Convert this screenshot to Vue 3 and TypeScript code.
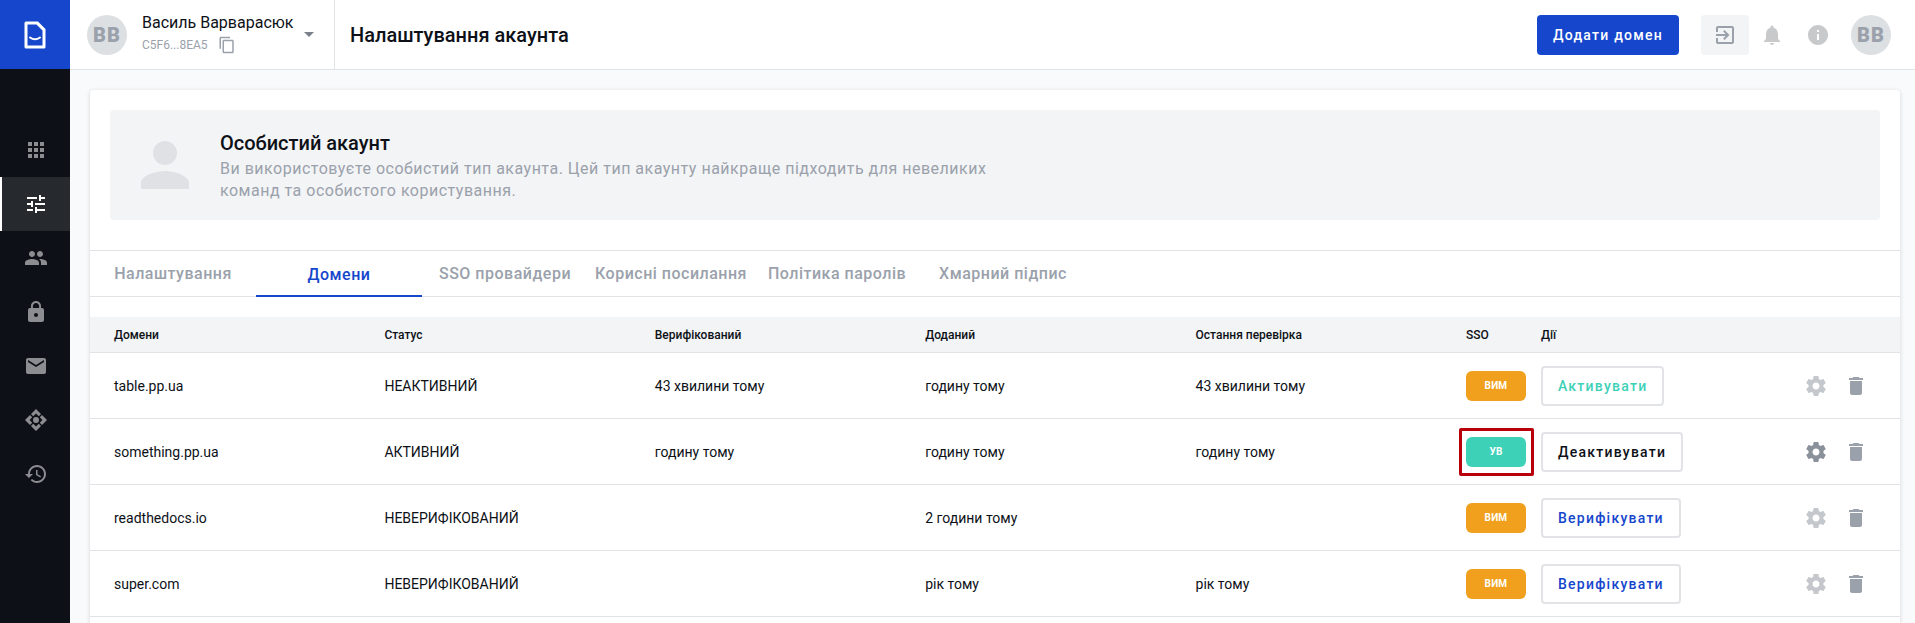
<script setup lang="ts">
interface Row { domain: string; status: string; verified: string; added: string; checked: string; sso: 'ВИМ' | 'УВ'; action: string; tone: string; active?: boolean }
const rows: Row[] = [
  { domain: 'table.pp.ua', status: 'НЕАКТИВНИЙ', verified: '43 хвилини тому', added: 'годину тому', checked: '43 хвилини тому', sso: 'ВИМ', action: 'Активувати', tone: 'teal' },
  { domain: 'something.pp.ua', status: 'АКТИВНИЙ', verified: 'годину тому', added: 'годину тому', checked: 'годину тому', sso: 'УВ', action: 'Деактивувати', tone: 'dark', active: true },
  { domain: 'readthedocs.io', status: 'НЕВЕРИФІКОВАНИЙ', verified: '', added: '2 години тому', checked: '', sso: 'ВИМ', action: 'Верифікувати', tone: 'blue' },
  { domain: 'super.com', status: 'НЕВЕРИФІКОВАНИЙ', verified: '', added: 'рік тому', checked: 'рік тому', sso: 'ВИМ', action: 'Верифікувати', tone: 'blue' },
]
const tabs = ['Налаштування', 'Домени', 'SSO провайдери', 'Корисні посилання', 'Політика паролів', 'Хмарний підпис']
const columns = ['Домени', 'Статус', 'Верифікований', 'Доданий', 'Остання перевірка', 'SSO', 'Дії']
const nav = [
  'M4 8h4V4H4v4zm6 12h4v-4h-4v4zm-6 0h4v-4H4v4zm0-6h4v-4H4v4zm6 0h4v-4h-4v4zm6-10v4h4V4h-4zm-6 4h4V4h-4v4zm6 6h4v-4h-4v4zm0 6h4v-4h-4v4z',
  'M3 17v2h6v-2H3zM3 5v2h10V5H3zm10 16v-2h8v-2h-8v-2h-2v6h2zM7 9v2H3v2h4v2h2V9H7zm14 4v-2H11v2h10zm-6-4h2V7h4V5h-4V3h-2v6z',
  'M16 11c1.66 0 2.99-1.34 2.99-3S17.66 5 16 5c-1.66 0-3 1.34-3 3s1.34 3 3 3zm-8 0c1.66 0 2.99-1.34 2.99-3S9.66 5 8 5C6.34 5 5 6.34 5 8s1.34 3 3 3zm0 2c-2.33 0-7 1.17-7 3.5V19h14v-2.5c0-2.33-4.67-3.5-7-3.5zm8 0c-.29 0-.62.02-.97.05 1.16.84 1.97 1.97 1.97 3.45V19h6v-2.5c0-2.33-4.67-3.5-7-3.5z',
  'M18 8h-1V6c0-2.76-2.24-5-5-5S7 3.24 7 6v2H6c-1.1 0-2 .9-2 2v10c0 1.1.9 2 2 2h12c1.1 0 2-.9 2-2V10c0-1.1-.9-2-2-2zm-6 9c-1.1 0-2-.9-2-2s.9-2 2-2 2 .9 2 2-.9 2-2 2zm3.1-9H8.9V6c0-1.71 1.39-3.1 3.1-3.1 1.71 0 3.1 1.39 3.1 3.1v2z',
  'M20 4H4c-1.1 0-1.99.9-1.99 2L2 18c0 1.1.9 2 2 2h16c1.1 0 2-.9 2-2V6c0-1.1-.9-2-2-2zm0 4l-8 5-8-5V6l8 5 8-5v2z',
  'M12 1L17 6 14.8 8.2 12 5.6 9.2 8.2 7 6zM23 12L18 17 15.8 14.8 18.4 12 15.8 9.2 18 7zM12 23L7 18 9.2 15.8 12 18.4 14.8 15.8 17 18zM1 12L6 7 8.2 9.2 5.6 12 8.2 14.8 6 17zM12 9a3 3 0 1 0 0 6 3 3 0 0 0 0-6z',
  'M13 3c-4.97 0-9 4.03-9 9H1l3.89 3.89.07.14L9 12H6c0-3.87 3.13-7 7-7s7 3.13 7 7-3.13 7-7 7c-1.93 0-3.68-.79-4.94-2.06l-1.42 1.42C8.27 19.99 10.51 21 13 21c4.97 0 9-4.03 9-9s-4.03-9-9-9zm-1 5v5l4.28 2.54.72-1.21-3.5-2.08V8H12z',
]
const gear = 'M19.43 12.98c.04-.32.07-.64.07-.98s-.03-.66-.07-.98l2.11-1.65c.19-.15.24-.42.12-.64l-2-3.46c-.12-.22-.39-.3-.61-.22l-2.49 1c-.52-.4-1.08-.73-1.69-.98l-.38-2.65C14.46 2.18 14.25 2 14 2h-4c-.25 0-.46.18-.49.42l-.38 2.65c-.61.25-1.17.59-1.69.98l-2.49-1c-.23-.09-.49 0-.61.22l-2 3.46c-.13.22-.07.49.12.64l2.11 1.65c-.04.32-.07.65-.07.98s.03.66.07.98l-2.11 1.65c-.19.15-.24.42-.12.64l2 3.46c.12.22.39.3.61.22l2.49-1c.52.4 1.08.73 1.69.98l.38 2.65c.03.24.24.42.49.42h4c.25 0 .46-.18.49-.42l.38-2.65c.61-.25 1.17-.59 1.69-.98l2.49 1c.23.09.49 0 .61-.22l2-3.46c.12-.22.07-.49-.12-.64l-2.11-1.65zM12 15.5c-1.93 0-3.5-1.57-3.5-3.5s1.57-3.5 3.5-3.5 3.5 1.57 3.5 3.5-1.57 3.5-3.5 3.5z'
const trash = 'M6 19c0 1.1.9 2 2 2h8c1.1 0 2-.9 2-2V7H6v12zM19 4h-3.5l-1-1h-5l-1 1H5v2h14V4z'
</script>

<template>
  <div class="app">
    <aside class="sidebar">
      <div class="logo">
        <svg width="24" height="30" viewBox="0 0 24 30">
          <path fill="#fff" fill-rule="evenodd" d="M3 1.5h12l7.5 7.5v18a1.5 1.5 0 0 1-1.5 1.5H3A1.5 1.5 0 0 1 1.5 27V3A1.5 1.5 0 0 1 3 1.5zM4.5 4.5v21h15V10.5l-6-6z" />
          <path fill="none" stroke="#fff" stroke-width="2" stroke-linecap="round" d="M7 17.5c3 2.2 7 2.2 10 0" />
        </svg>
      </div>
      <nav class="nav">
        <div v-for="(d, i) in nav" :key="i" class="nav-item" :class="{ current: i === 1 }">
          <svg width="24" height="24" viewBox="0 0 24 24"><path :d="d" fill="currentColor" /></svg>
        </div>
      </nav>
    </aside>

    <div class="main">
      <header class="topbar">
        <div class="account">
          <div class="avatar">ВВ</div>
          <div class="who">
            <div class="name">Василь Варварасюк</div>
            <div class="hash">
              <span>C5F6...8EA5</span>
              <svg width="18" height="18" viewBox="0 0 24 24"><path fill="#9aa1ab" d="M16 1H4c-1.1 0-2 .9-2 2v14h2V3h12V1zm3 4H8c-1.1 0-2 .9-2 2v14c0 1.1.9 2 2 2h11c1.1 0 2-.9 2-2V7c0-1.1-.9-2-2-2zm0 16H8V7h11v14z" /></svg>
            </div>
          </div>
          <span class="caret"></span>
        </div>
        <h1 class="title">Налаштування акаунта</h1>
        <button class="add">Додати домен</button>
        <div class="exit">
          <svg width="24" height="24" viewBox="0 0 24 24"><path fill="#9aa1ab" d="M10.09 15.59L11.5 17l5-5-5-5-1.41 1.41L12.67 11H3v2h9.67l-2.58 2.59zM19 3H5c-1.11 0-2 .9-2 2v4h2V5h14v14H5v-4H3v4c0 1.1.89 2 2 2h14c1.1 0 2-.9 2-2V5c0-1.1-.9-2-2-2z" /></svg>
        </div>
        <svg class="bell" width="24" height="24" viewBox="0 0 24 24"><path fill="#c8c9cb" d="M12 22c1.1 0 2-.9 2-2h-4c0 1.1.89 2 2 2zm6-6v-5c0-3.07-1.64-5.64-4.5-6.32V4c0-.83-.67-1.5-1.5-1.5s-1.5.67-1.5 1.5v.68C7.63 5.36 6 7.92 6 11v5l-2 2v1h16v-1l-2-2z" /></svg>
        <svg class="info" width="24" height="24" viewBox="0 0 24 24"><path fill="#c8c9cb" d="M12 2C6.48 2 2 6.48 2 12s4.48 10 10 10 10-4.48 10-10S17.52 2 12 2zm1 15h-2v-6h2v6zm0-8h-2V7h2v2z" /></svg>
        <div class="avatar end">ВВ</div>
      </header>

      <main class="page">
        <section class="card">
          <div class="banner">
            <svg width="72" height="72" viewBox="0 0 24 24"><path fill="#dfe1e4" d="M12 12c2.21 0 4-1.79 4-4s-1.79-4-4-4-4 1.79-4 4 1.79 4 4 4zm0 2c-2.67 0-8 1.34-8 4v2h16v-2c0-2.66-5.33-4-8-4z" /></svg>
            <div class="banner-text">
              <h2>Особистий акаунт</h2>
              <p>Ви використовуєте особистий тип акаунта. Цей тип акаунту найкраще підходить для невеликих команд та особистого користування.</p>
            </div>
          </div>

          <div class="tabs">
            <div v-for="(t, i) in tabs" :key="t" class="tab" :class="{ on: i === 1 }">{{ t }}</div>
          </div>

          <div class="table">
            <div class="line head">
              <div v-for="c in columns" :key="c">{{ c }}</div>
            </div>
            <div v-for="r in rows" :key="r.domain" class="line row">
              <div>{{ r.domain }}</div>
              <div>{{ r.status }}</div>
              <div>{{ r.verified }}</div>
              <div>{{ r.added }}</div>
              <div>{{ r.checked }}</div>
              <div class="sso-cell">
                <span class="pill" :class="r.active ? 'pill-on' : 'pill-off'">{{ r.sso }}</span>
                <span v-if="r.active" class="mark"></span>
              </div>
              <div class="actions">
                <button class="act" :class="r.tone">{{ r.action }}</button>
                <div class="tools">
                  <svg width="24" height="24" viewBox="0 0 24 24"><path :fill="r.active ? '#8b919a' : '#c4c8cd'" :d="gear" /></svg>
                  <svg width="24" height="24" viewBox="0 0 24 24"><path fill="#9aa1ab" :d="trash" /></svg>
                </div>
              </div>
            </div>
          </div>
        </section>
      </main>
    </div>
  </div>
</template>

<style>
html, body { margin: 0; height: 100%; overflow: hidden; }
</style>

<style scoped>
.app { display: flex; height: 623px; overflow: hidden; font-family: Roboto, "Liberation Sans", sans-serif; color: #0d1117; background: #f9fafb; }
.sidebar { flex: 0 0 70px; background: #0d1117; }
.logo { height: 69px; background: #1546cc; display: flex; align-items: center; justify-content: center; }
.nav { padding-top: 54px; }
.nav-item { height: 54px; display: flex; align-items: center; justify-content: center; color: #8b8d91; box-sizing: border-box; }
.nav-item svg { margin-left: 2px; }
.nav-item.current { background: #26292e; color: #fff; border-left: 2px solid #fff; }
.nav-item.current svg { margin-left: 0; }
.main { flex: 1; min-width: 0; display: flex; flex-direction: column; }
.topbar { height: 69px; flex: none; background: #fff; border-bottom: 1px solid #e1e3e6; display: flex; align-items: center; padding-right: 24px; }
.account { width: 265px; height: 100%; box-sizing: border-box; border-right: 1px solid #e1e3e6; display: flex; align-items: center; padding-left: 17px; }
.avatar { width: 40px; height: 40px; border-radius: 50%; background: #dde0e3; color: #9aa1ab; font-weight: 900; font-size: 20px; letter-spacing: 1px; display: flex; align-items: center; justify-content: center; flex: none; }
.who { margin-left: 15px; width: 162px; }
.name { font-size: 16px; line-height: 20px; height: 20px; margin-top: -1px; }
.hash { display: flex; align-items: center; gap: 10px; font-size: 12px; color: #9aa1ab; height: 20px; margin-top: 2px; }
.caret { width: 0; height: 0; border-left: 5px solid transparent; border-right: 5px solid transparent; border-top: 5px solid #7b818a; }
.title { font-size: 20px; font-weight: 500; margin: 0 auto 0 15px; }
.add { width: 142px; height: 40px; border: 0; border-radius: 4px; background: #1546cc; color: #fff; font: 500 14px Roboto, sans-serif; letter-spacing: 1.25px; padding: 0; }
.exit { width: 48px; height: 40px; margin-left: 22px; background: #f3f4f6; border-radius: 4px; display: flex; align-items: center; justify-content: center; }
.bell { margin-left: 11px; }
.info { margin-left: 22px; }
.end { margin-left: 21px; }
.page { flex: 1; padding: 20px 15px 0 20px; min-height: 0; }
.card { background: #fff; border-radius: 4px 4px 0 0; box-shadow: 0 1px 4px rgba(13, 17, 23, 0.16); height: 100%; box-sizing: border-box; padding-top: 20px; }
.banner { margin: 0 20px; height: 110px; background: #f3f4f6; border-radius: 4px; display: flex; align-items: center; padding-left: 19px; }
.banner-text { margin-left: 19px; width: 800px; }
.banner h2 { margin: 0; font-size: 20px; font-weight: 500; line-height: 28px; }
.banner p { margin: 1px 0 0; font-size: 16px; line-height: 22px; letter-spacing: 0.5px; color: #9aa1ab; }
.tabs { display: flex; margin-top: 30px; border-top: 1px solid #e1e3e6; border-bottom: 1px solid #e1e3e6; height: 45px; }
.tab { width: 166px; font-size: 16px; font-weight: 500; letter-spacing: 0.5px; color: #9aa1ab; display: flex; align-items: center; justify-content: center; white-space: nowrap; box-sizing: border-box; }
.tab.on { color: #1546cc; border-bottom: 2px solid #1546cc; height: 46px; padding-top: 2px; }
.table { margin-top: 20px; }
.line { display: grid; grid-template-columns: repeat(5, 270.4px) 75px 1fr; padding-left: 24px; align-items: center; border-bottom: 1px solid #e1e3e6; }
.head { height: 35px; background: #f3f4f6; font-size: 12px; font-weight: 500; }
.row { height: 65px; font-size: 14px; }
.sso-cell { position: relative; display: flex; }
.pill { width: 60px; height: 30px; border-radius: 6px; color: #fff; font-size: 10px; font-weight: 700; letter-spacing: 0.2px; display: flex; align-items: center; justify-content: center; }
.pill-off { background: #f0a01c; }
.pill-on { background: #3dd1b8; }
.mark { position: absolute; left: -7px; top: -9px; width: 75px; height: 48px; box-sizing: border-box; border: 3px solid #b8000d; border-radius: 2px; }
.actions { display: flex; align-items: center; justify-content: space-between; padding-right: 32px; }
.act { height: 40px; box-sizing: border-box; background: #fff; border: 2px solid #e1e3e6; border-radius: 4px; padding: 0 15px; font: 500 14px Roboto, sans-serif; letter-spacing: 1.25px; }
.teal { color: #3dd1b8; }
.dark { color: #0d1117; }
.blue { color: #1546cc; }
.tools { display: flex; gap: 16px; }
</style>
